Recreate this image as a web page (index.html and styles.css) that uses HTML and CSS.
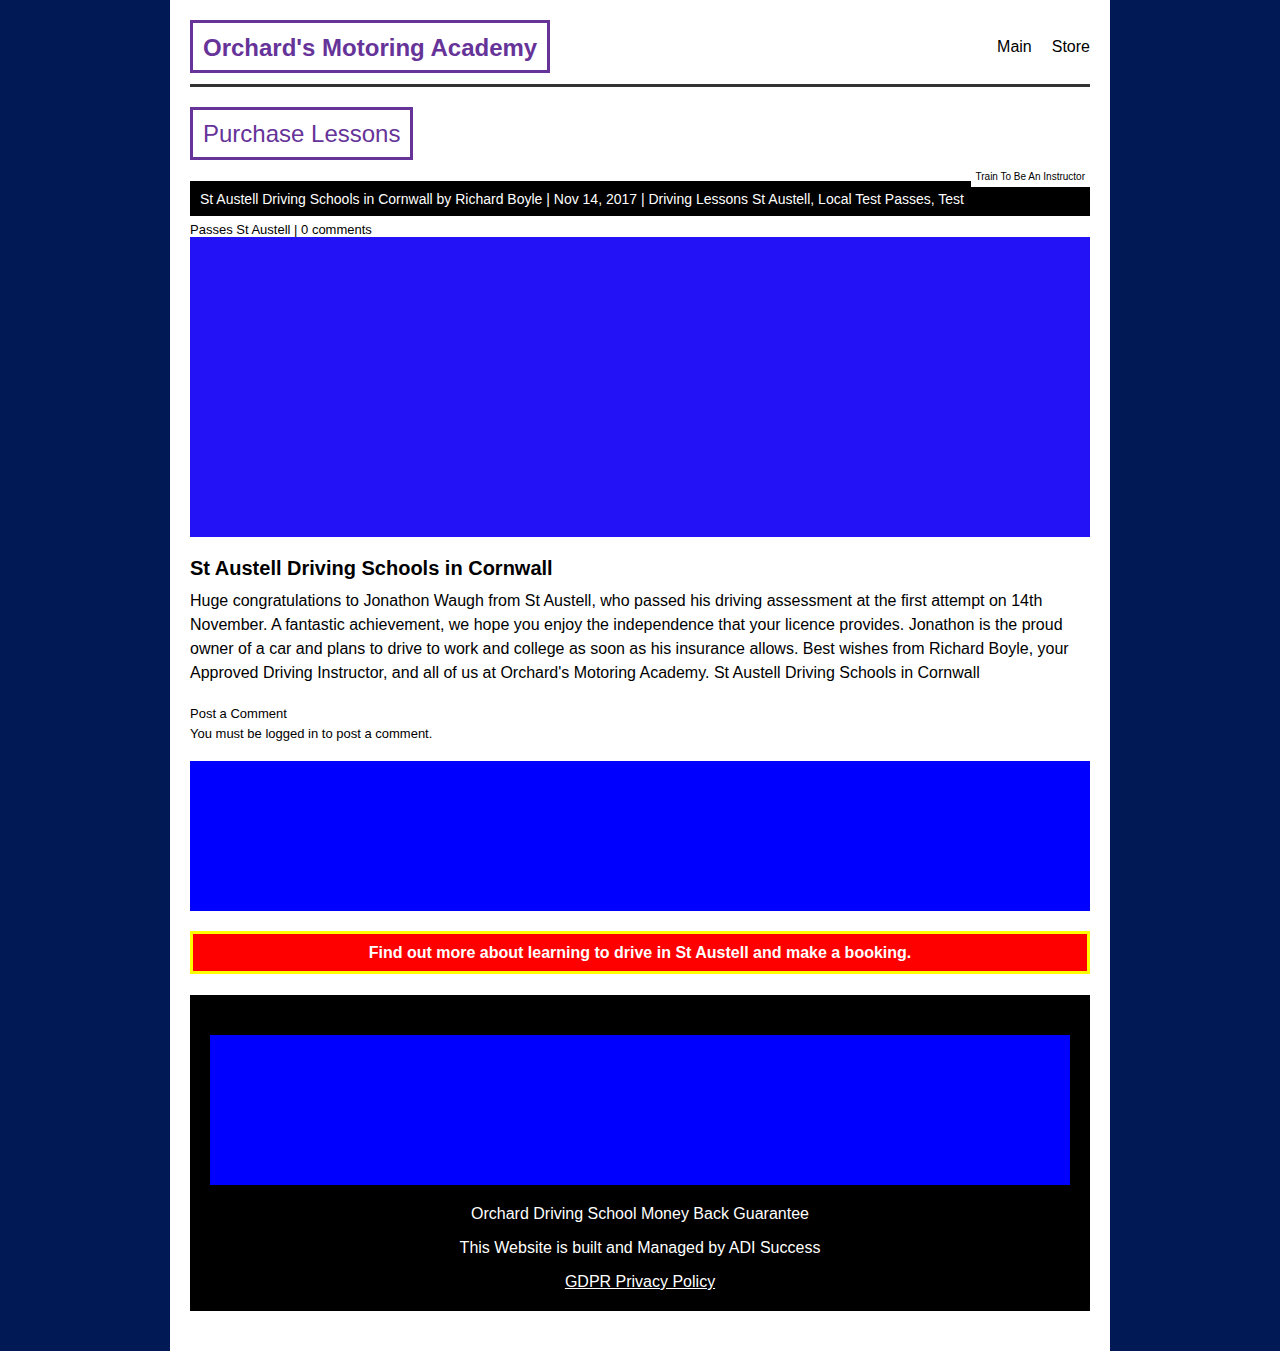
FILE: index.html
```html
<!DOCTYPE html>
<html lang="en">
<head>
<meta charset="utf-8">
<title>St Austell Driving Schools in Cornwall</title>
<link rel="stylesheet" href="styles.css">
</head>
<body>
<div class="page">
  <header class="site-header">
    <div class="logo">Orchard's Motoring Academy</div>
    <nav class="nav">
      <a href="#">Main</a>
      <a href="#">Store</a>
    </nav>
  </header>
  <div class="rule"></div>
  <div class="purchase">Purchase Lessons</div>
  <div class="meta-wrap">
    <a class="train-tab" href="#">Train To Be An Instructor</a>
    <div class="meta-bar">St Austell Driving Schools in Cornwall by Richard Boyle | Nov 14, 2017 | Driving Lessons St Austell, Local Test Passes, Test</div>
    <div class="meta-rest">Passes St Austell | 0 comments</div>
  </div>
  <div class="hero"></div>
  <h1 class="title">St Austell Driving Schools in Cornwall</h1>
  <p class="body-text">Huge congratulations to Jonathon Waugh from St Austell, who passed his driving assessment at the first attempt on 14th November. A fantastic achievement, we hope you enjoy the independence that your licence provides. Jonathon is the proud owner of a car and plans to drive to work and college as soon as his insurance allows. Best wishes from Richard Boyle, your Approved Driving Instructor, and all of us at Orchard's Motoring Academy. St Austell Driving Schools in Cornwall</p>
  <div class="comments">
    <div>Post a Comment</div>
    <div>You must be logged in to post a comment.</div>
  </div>
  <div class="banner"></div>
  <a class="cta" href="#">Find out more about learning to drive in St Austell and make a booking.</a>
  <footer class="footer">
    <div class="footer-banner"></div>
    <p>Orchard Driving School Money Back Guarantee</p>
    <p>This Website is built and Managed by ADI Success</p>
    <p><a href="#">GDPR Privacy Policy</a></p>
  </footer>
</div>
</body>
</html>
```

FILE: styles.css
```css
html, body {
  margin: 0;
  padding: 0;
}
body {
  background: #011a56;
  font-family: "Liberation Sans", Arial, sans-serif;
  color: #000;
}
.page {
  width: 900px;
  margin: 0 auto;
  background: #fff;
  padding: 20px 20px 40px;
  min-height: 1291px;
}
.site-header {
  display: flex;
  justify-content: space-between;
  align-items: center;
}
.logo {
  border: 3px solid #663399;
  color: #663399;
  font-weight: bold;
  font-size: 24px;
  line-height: 28px;
  padding: 11px 10px 8px;
}
.nav {
  display: flex;
  gap: 20px;
  font-size: 16px;
}
.nav a {
  color: #000;
  text-decoration: none;
}
.rule {
  height: 3px;
  background: #333;
  margin-top: 11px;
}
.purchase {
  display: inline-block;
  margin-top: 20px;
  border: 3px solid #663399;
  color: #663399;
  font-size: 24px;
  line-height: 28px;
  padding: 10px 10px 9px;
}
.meta-wrap {
  position: relative;
  margin-top: 21px;
}
.train-tab {
  position: absolute;
  right: 0;
  top: -11px;
  background: #fff;
  color: #000;
  font-size: 10px;
  line-height: 14px;
  padding: 0 5px 3px;
  text-decoration: none;
}
.meta-bar {
  background: #000;
  color: #fff;
  font-size: 14px;
  line-height: 16px;
  height: 35px;
  box-sizing: border-box;
  padding: 10px 10px 9px;
  white-space: nowrap;
}
.meta-rest {
  font-size: 13px;
  line-height: 15px;
  padding-top: 6px;
}
.hero {
  height: 300px;
  background: #2212f5;
}
.title {
  font-size: 20px;
  line-height: 24px;
  font-weight: bold;
  margin: 19px 0 0;
}
.body-text {
  font-size: 16px;
  line-height: 24px;
  margin: 9px 0 0;
}
.comments {
  margin-top: 19px;
  font-size: 13px;
  line-height: 20px;
}
.banner {
  height: 150px;
  background: #0000ff;
  margin-top: 17px;
}
.cta {
  display: block;
  margin-top: 20px;
  background: #ff0000;
  border: 3px solid #ffff00;
  color: #fff;
  font-weight: bold;
  font-size: 16px;
  line-height: 20px;
  padding: 9px 10px 8px;
  text-align: center;
  text-decoration: none;
}
.footer {
  margin-top: 21px;
  background: #000;
  color: #fff;
  padding: 40px 20px 5px;
  text-align: center;
  font-size: 16px;
}
.footer-banner {
  height: 150px;
  background: #0000ff;
  margin-bottom: 19px;
}
.footer p {
  margin: 0 0 14px;
  line-height: 20px;
}
.footer a {
  color: #fff;
  text-decoration: underline;
}
```
